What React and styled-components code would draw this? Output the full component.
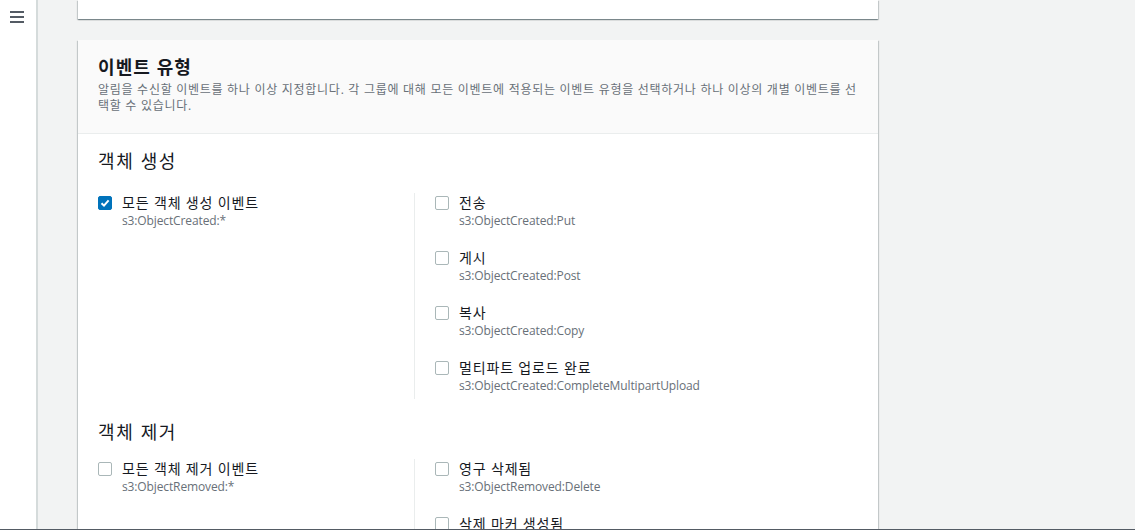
import React from "react";
import styled, { createGlobalStyle } from "styled-components";

const Global = createGlobalStyle`
  html, body { margin: 0; padding: 0; height: 100%; overflow: hidden; }
  body {
    font-family: "Open Sans", "Noto Sans CJK KR", "Noto Sans", sans-serif;
    background: #f2f3f3;
    color: #16191f;
  }
`;

const Layout = styled.div`
  display: flex;
  height: 530px;
  overflow: hidden;
`;

const Sidebar = styled.aside`
  width: 38px;
  flex: none;
  background: #fff;
  border-right: 2px solid #d5dbdb;
  display: flex;
  justify-content: center;
  padding-top: 11px;
  box-sizing: border-box;
`;

const Hamburger = styled.div`
  width: 14px;
  height: 12px;
  display: flex;
  flex-direction: column;
  justify-content: space-between;
  margin-left: -2px;
  span { display: block; height: 2px; background: #545b64; }
`;

const Main = styled.main`
  flex: 1;
  padding: 0 257px 0 40px;
  display: flex;
  flex-direction: column;
  gap: 21px;
`;

const Card = styled.section`
  width: 800px;
  background: #fff;
  box-shadow: 0 1px 1px 0 rgba(0, 28, 36, 0.3), 1px 1px 1px 0 rgba(0, 28, 36, 0.15),
    -1px 1px 1px 0 rgba(0, 28, 36, 0.15);
  flex: none;
`;

const TopCard = styled(Card)`
  height: 19px;
`;

const CardHeader = styled.header`
  background: #fafafa;
  border-bottom: 1px solid #eaeded;
  padding: 13px 20px 19px;
`;

const Title = styled.h2`
  margin: 0 0 1px;
  font-size: 18px;
  line-height: 28px;
  font-weight: 700;
  letter-spacing: 0.06em;
  color: #16191f;
`;

const Description = styled.p`
  margin: 0;
  font-size: 12px;
  line-height: 16px;
  letter-spacing: 0.06em;
  color: #687078;
`;

const CardBody = styled.div`
  padding: 0 20px;
`;

const SectionTitle = styled.h3`
  margin: ${(p) => p.$top}px 0 ${(p) => p.$bottom}px;
  font-size: 18px;
  line-height: 28px;
  font-weight: 400;
  letter-spacing: 0.09em;
  color: #16191f;
`;

const Grid = styled.div`
  display: grid;
  grid-template-columns: 316px 1fr;
`;

const Column = styled.div`
  display: flex;
  flex-direction: column;
  gap: 19px;
  padding-bottom: 5px;
  ${(p) => p.$divided && `border-left: 1px solid #eaeded; padding-left: 20px;`}
`;

const Option = styled.label`
  display: flex;
  gap: 10px;
  align-items: flex-start;
`;

const Box = styled.span`
  width: 14px;
  height: 14px;
  margin-top: 3px;
  box-sizing: border-box;
  border-radius: 2px;
  flex: none;
  border: 1px solid ${(p) => (p.$checked ? "#0073bb" : "#aab7b8")};
  background: ${(p) => (p.$checked ? "#0073bb" : "#fff")};
  display: flex;
  align-items: center;
  justify-content: center;
`;

const Texts = styled.span`
  display: flex;
  flex-direction: column;
`;

const Label = styled.span`
  font-size: 14px;
  line-height: 20px;
  letter-spacing: 0.06em;
  color: #16191f;
`;

const Sub = styled.span`
  font-size: 12px;
  line-height: 16px;
  letter-spacing: -0.01em;
  color: #687078;
`;

const BottomLine = styled.div`
  position: fixed;
  left: 0;
  right: 0;
  bottom: 0;
  height: 1px;
  background: #545b64;
`;

const Check = ({ label, sub, checked }) => (
  <Option>
    <Box $checked={checked}>
      {checked && (
        <svg width="10" height="10" viewBox="0 0 10 10">
          <path d="M1.5 5.2 L4 7.6 L8.6 2.4" fill="none" stroke="#fff" strokeWidth="2" />
        </svg>
      )}
    </Box>
    <Texts>
      <Label>{label}</Label>
      <Sub>{sub}</Sub>
    </Texts>
  </Option>
);

export default function App() {
  return (
    <>
      <Global />
      <Layout>
        <Sidebar>
          <Hamburger>
            <span />
            <span />
            <span />
          </Hamburger>
        </Sidebar>
        <Main>
          <TopCard />
          <Card>
            <CardHeader>
              <Title>이벤트 유형</Title>
              <Description>
                알림을 수신할 이벤트를 하나 이상 지정합니다. 각 그룹에 대해 모든 이벤트에 적용되는 이벤트 유형을 선택하거나 하나 이상의 개별 이벤트를 선택할 수 있습니다.
              </Description>
            </CardHeader>
            <CardBody>
              <SectionTitle $top={13} $bottom={18}>객체 생성</SectionTitle>
              <Grid>
                <Column>
                  <Check checked label="모든 객체 생성 이벤트" sub="s3:ObjectCreated:*" />
                </Column>
                <Column $divided>
                  <Check label="전송" sub="s3:ObjectCreated:Put" />
                  <Check label="게시" sub="s3:ObjectCreated:Post" />
                  <Check label="복사" sub="s3:ObjectCreated:Copy" />
                  <Check label="멀티파트 업로드 완료" sub="s3:ObjectCreated:CompleteMultipartUpload" />
                </Column>
              </Grid>
              <SectionTitle $top={19} $bottom={13}>객체 제거</SectionTitle>
              <Grid>
                <Column>
                  <Check label="모든 객체 제거 이벤트" sub="s3:ObjectRemoved:*" />
                </Column>
                <Column $divided>
                  <Check label="영구 삭제됨" sub="s3:ObjectRemoved:Delete" />
                  <Check label="삭제 마커 생성됨" sub="s3:ObjectRemoved:DeleteMarkerCreated" />
                </Column>
              </Grid>
            </CardBody>
          </Card>
        </Main>
      </Layout>
      <BottomLine />
    </>
  );
}
